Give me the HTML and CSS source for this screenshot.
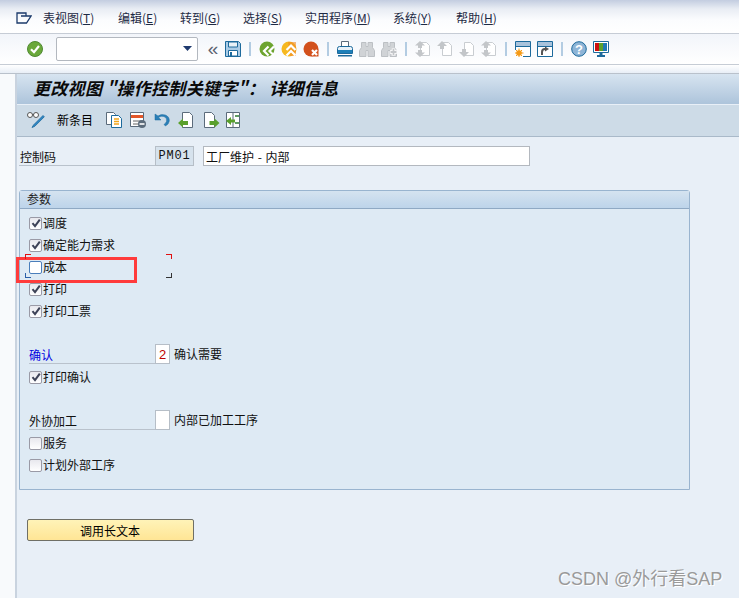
FILE: index.html
```html
<!DOCTYPE html>
<html lang="zh-CN">
<head>
<meta charset="utf-8">
<title>更改视图</title>
<link rel="stylesheet" href="styles.css">
</head>
<body>
<svg class="defs" width="0" height="0" aria-hidden="true">
  <defs>
    <symbol id="tick" viewBox="0 0 12 12"><path d="M2.5 6.2 5 9.2 9.8 2.6" fill="none" stroke="#3d4257" stroke-width="2"/></symbol>
    <symbol id="bino" viewBox="0 0 16 16"><path d="M2.500 1.500h4.500v4h2v-4h4.500v5l2 3v6H9V9.500H7v6H.500v-6l2-3z" fill="#d0d3d6" stroke="#bcc0c4"/></symbol>
    <symbol id="page" viewBox="0 0 16 16"><path d="M5.500 1.500h6l3 3v10h-9z" fill="#fff" stroke="#c9cdd1"/></symbol>
  </defs>
</svg>
<header class="menubar">
  <svg class="menu-icon" width="16" height="12" viewBox="0 0 16 12"><path d="M10 4V1H1v10h9.500L15 4H5" fill="none" stroke="#1b3a6b" stroke-width="1.300"/></svg>
  <nav class="menu">
    <span class="m1">表视图(<u>T</u>)</span>
    <span class="m2">编辑(<u>E</u>)</span>
    <span class="m3">转到(<u>G</u>)</span>
    <span class="m4">选择(<u>S</u>)</span>
    <span class="m5">实用程序(<u>M</u>)</span>
    <span class="m6">系统(<u>Y</u>)</span>
    <span class="m7">帮助(<u>H</u>)</span>
  </nav>
</header>
<div class="toolbar">
  <svg class="ic" viewBox="0 0 16 16"><circle cx="8" cy="8" r="7.500" fill="#6aa83a" stroke="#4f8a32"/><path d="M4 8.200 7 11.200 12 5" fill="none" stroke="#fff" stroke-width="2.200"/></svg>
  <div class="combo"><svg class="combo-arrow" width="9" height="5" viewBox="0 0 9 5"><path d="M0 0h9L4.500 5z" fill="#1f3a6e"/></svg></div>
  <span class="chev">«</span>
  <svg class="ic" viewBox="0 0 16 16"><path d="M.5.500h13l2 2v13H.500z" fill="#a9cbe6" stroke="#1d6a9c"/><path d="M3.500 1v5h9V1z" fill="#e8f1f8" stroke="#1d6a9c"/><path d="M3.500 15V9.500h9V15z" fill="#fff" stroke="#1d6a9c"/><path d="M6 11v4" stroke="#1d6a9c" stroke-width="2"/></svg>
  <i class="sep"></i>
  <svg class="ic" viewBox="0 0 16 16"><circle cx="8" cy="8" r="7.500" fill="#6da42f"/><path d="M9.500 5.500 5 10l4.500 4.500M15 5.500 10.500 10l4.500 4.500" fill="none" stroke="#fff" stroke-width="2.200"/></svg>
  <svg class="ic" viewBox="0 0 16 16"><circle cx="8" cy="8" r="7.500" fill="#f6b81f"/><path d="M7 1h8v14H9z" fill="#f08a24" opacity=".6"/><path d="M5.500 9l4.500-4.500L14.500 9M5.500 14.500 10 10l4.500 4.500" fill="none" stroke="#fff" stroke-width="2.200"/></svg>
  <svg class="ic" viewBox="0 0 16 16"><circle cx="8" cy="8" r="7.500" fill="#d2501c"/><path d="M8.500 8.500h7v7h-7z" fill="#d2501c"/><path d="M9 9l5 5M14 9l-5 5" stroke="#fff" stroke-width="2.200"/></svg>
  <i class="sep"></i>
  <svg class="ic" viewBox="0 0 16 16"><path d="M4.500.500h7v6h-7z" fill="#fff" stroke="#5b6b7b"/><path d="M.5 7.500a2 2 0 0 1 2-2h11a2 2 0 0 1 2 2v5H.500z" fill="#e8f1f8" stroke="#1d6a9c"/><path d="M1 9h14v3H1z" fill="#1d7fb8"/><path d="M1 14h14v1.500H1z" fill="#1d6a9c"/></svg>
  <svg class="ic"><use href="#bino"/></svg>
  <svg class="ic" viewBox="0 0 16 16"><use href="#bino" width="16" height="16"/><path d="M9 11h7M12.500 7.500v7" stroke="#fff" stroke-width="3.500"/><path d="M9.500 11h6M12.500 8v6" stroke="#c3c6c9" stroke-width="1.800"/></svg>
  <i class="sep"></i>
  <svg class="ic" viewBox="0 0 16 16"><use href="#page" width="16" height="16"/><path d="M5 0 0 4.500h3V7h4V4.500h3zM3 9v2.500H0L5 16l5-4.500H7V9z" fill="#c3c6c9"/></svg>
  <svg class="ic" viewBox="0 0 16 16"><use href="#page" width="16" height="16"/><path d="M5 0 0 5h3v3h4V5h3z" fill="#c3c6c9"/></svg>
  <svg class="ic" viewBox="0 0 16 16"><use href="#page" width="16" height="16"/><path d="M5 16l5-5H7V8H3v3H0z" fill="#c3c6c9"/></svg>
  <svg class="ic" viewBox="0 0 16 16"><use href="#page" width="16" height="16"/><path d="M5 0 0 4.500h3V7h4V4.500h3zM3 9v2.500H0L5 16l5-4.500H7V9z" fill="#c3c6c9"/></svg>
  <i class="sep"></i>
  <svg class="ic" viewBox="0 0 16 16"><path d="M.5.500h15v15H.500z" fill="#fff" stroke="#1d6a9c"/><path d="M1 1h14v4H1z" fill="#a9c3dc"/><path d="M0 5.500h16" stroke="#1d6a9c"/><path d="M0 9h8v7H0z" fill="#fff"/><circle cx="4" cy="12" r="2.800" fill="#f59a17"/><path d="M4 7.500v9M-.5 12h9M1 9l6 6M7 9l-6 6" stroke="#f59a17"/></svg>
  <svg class="ic" viewBox="0 0 16 16"><path d="M.5.500h15v15H.500z" fill="#fff" stroke="#1d6a9c"/><path d="M1 1h14v4H1z" fill="#a9c3dc"/><path d="M0 5.500h16" stroke="#1d6a9c"/><path d="M5 14v-3q0-3 3-3h1" fill="none" stroke="#555" stroke-width="2"/><path d="M8 5.500l4 2.500-4 2.500z" fill="#555"/></svg>
  <i class="sep"></i>
  <svg class="ic" viewBox="0 0 16 16"><circle cx="8" cy="8" r="7.300" fill="#8db4d6" stroke="#1d6a9c"/><text class="help-q" x="8" y="12.500" text-anchor="middle">?</text></svg>
  <svg class="ic" viewBox="0 0 16 16"><path d="M.5.500h15v11H.500z" fill="#fff" stroke="#1d6a9c"/><path d="M2 2h4v8H2z" fill="#cc1010"/><path d="M6 2h4v8H6z" fill="#5aa02c"/><path d="M10 2h4v8h-4z" fill="#1f77b4"/><path d="M6.500 12h3v2h-3zM4 14h8v2H4z" fill="#1d6a9c"/></svg>
</div>
<div class="toolbar-gap"></div>
<main class="screen">
  <h1 class="title">更改视图 "操作控制关键字"： 详细信息</h1>
  <div class="appbar">
    <svg class="ic ic-wide" viewBox="0 0 18 16"><circle cx="3" cy="3" r="2.500" fill="#fff" stroke="#555"/><circle cx="9" cy="3" r="2.500" fill="#fff" stroke="#555"/><path d="M5.500 2.500h1" stroke="#555"/><path d="M16 3.500 6.500 13 5 15.500l2.800-1.200 9.500-9.500z" fill="#2f86c4" stroke="#1d6a9c" stroke-width=".8"/></svg>
    <span class="appbar-text">新条目</span>
    <svg class="ic ap1" viewBox="0 0 16 16"><path d="M.5.500h7l2 2v10h-9z" fill="#fff" stroke="#5b6b7b"/><path d="M5.500 3.500h7l3 3v9h-10z" fill="#fff" stroke="#1d6a9c"/><path d="M8 7h5M8 9.500h5M8 12h5" stroke="#f2a71c" stroke-width="1.300"/></svg>
    <svg class="ic ap2" viewBox="0 0 16 16"><path d="M.5.500h13v14H.500z" fill="#fff" stroke="#5b6b7b"/><path d="M1 3h12v3H1z" fill="#e2572a"/><path d="M3 9h8M3 12h5" stroke="#666"/><circle cx="12" cy="12" r="4" fill="#5b6b7b"/><path d="M9.500 12h5" stroke="#fff" stroke-width="1.600"/></svg>
    <svg class="ic ap3" viewBox="0 0 16 16"><path d="M1 2v6h6L4.500 5.500Q7 3.500 10 4.500q3.500 1.500 2.500 5-.8 2-2.500 3l1.500 1.500q3.500-2 3.800-5 .2-4.500-4-6-4-1.200-7.300 1z" fill="#2a7fb8" stroke="#1d6a9c" stroke-width=".5"/></svg>
    <svg class="ic ap4" viewBox="0 0 16 16"><path d="M4.500.500h7l3 3v12h-10z" fill="#fff" stroke="#5b6b7b"/><path d="M0 11l5-4.500V9h5v4H5v2.500z" fill="#5aa02c"/></svg>
    <svg class="ic ap5" viewBox="0 0 16 16"><path d="M.5.500h7l3 3v12h-10z" fill="#fff" stroke="#5b6b7b"/><path d="M15.500 11l-5-4.500V9h-5v4h5v2.500z" fill="#5aa02c"/></svg>
    <svg class="ic ap6" viewBox="0 0 16 16"><path d="M.5.500h13v15H.500z" fill="#fff" stroke="#5b6b7b"/><path d="M7 .500v15" stroke="#5b6b7b"/><path d="M9 4h4M9 11h4" stroke="#2e7d32" stroke-width="1.500"/><path d="M0 9l5-4v2.500h4v3H5V13z" fill="#5aa02c"/></svg>
  </div>
  <div class="content">
    <div class="control-row">
      <label class="field-label field-label-top">控制码</label>
      <span class="code-box">PM01</span>
      <span class="text-box">工厂维护 - 内部</span>
    </div>
    <section class="group">
      <div class="group-head">参数</div>
      <div class="group-body">
        <div class="check-row"><span class="cb"><svg width="12" height="12"><use href="#tick"/></svg></span>调度</div>
        <div class="check-row"><span class="cb"><svg width="12" height="12"><use href="#tick"/></svg></span>确定能力需求</div>
        <div class="check-row"><span class="cb cb-focus"></span>成本</div>
        <div class="check-row"><span class="cb"><svg width="12" height="12"><use href="#tick"/></svg></span>打印</div>
        <div class="check-row"><span class="cb"><svg width="12" height="12"><use href="#tick"/></svg></span>打印工票</div>
        <div class="field-row">
          <label class="field-label field-label-blue">确认</label>
          <span class="mini-box mini-red">2</span>
          <span class="after-label">确认需要</span>
        </div>
        <div class="check-row check-row-sub"><span class="cb"><svg width="12" height="12"><use href="#tick"/></svg></span>打印确认</div>
        <div class="field-row">
          <label class="field-label">外协加工</label>
          <span class="mini-box"></span>
          <span class="after-label">内部已加工工序</span>
        </div>
        <div class="check-row check-row-sub"><span class="cb"></span>服务</div>
        <div class="check-row"><span class="cb"></span>计划外部工序</div>
      </div>
    </section>
    <button class="long-text" type="button">调用长文本</button>
  </div>
</main>
<div class="highlight"></div>
<div class="focus-marks"></div>
<div class="watermark">CSDN @外行看SAP</div>
</body>
</html>
```
FILE: styles.css
```css
* { box-sizing: border-box; }
html, body { height: 100%; }
body {
  margin: 0;
  position: relative;
  overflow: hidden;
  background: #f8fafc;
  font: 12px/20px "Noto Sans CJK SC", "Liberation Sans", sans-serif;
  color: #111;
}
.defs { position: absolute; }
.menubar {
  height: 34px;
  display: flex;
  align-items: center;
  padding: 3px 0 0 16px;
  background: linear-gradient(#c3cde0, #e9edf4 9px, #fbfcfe 20px, #ffffff);
  border-bottom: 1px solid #c6ccd5;
}
.menu-icon { flex: none; }
.menu { display: flex; margin-left: 11px; color: #1e2a44; }
.menu span { white-space: nowrap; }
.menu u { text-underline-offset: 1px; }
.m1, .m2, .m3, .m4, .m5, .m6, .m7 { display: block; }
.m1 { width: 75px; }
.m2 { width: 62px; }
.m3 { width: 63px; }
.m4 { width: 62px; }
.m5 { width: 88px; }
.m6 { width: 63px; }
.toolbar {
  height: 31px;
  display: flex;
  align-items: center;
  gap: 6px;
  padding: 0 0 1px 27px;
  background: linear-gradient(#f2f5fa, #ffffff);
  border-bottom: 1px solid #c6ccd5;
}
.ic { width: 16px; height: 16px; flex: none; display: block; }
.ic-wide { width: 18px; }
.help-q { font: bold 13px "Liberation Sans", sans-serif; fill: #fff; }
.combo {
  width: 142px;
  height: 24px;
  margin-left: 7px;
  display: flex;
  align-items: center;
  justify-content: flex-end;
  padding-right: 5px;
  background: #fff;
  border: 1px solid #b3b8bf;
  border-radius: 2px;
}
.chev {
  width: 14px;
  margin: 0 -1px 0 2px;
  font: 19px/20px "Liberation Sans", sans-serif;
  color: #5a6370;
  text-align: center;
}
.sep {
  width: 6px;
  height: 14px;
  flex: none;
  background: linear-gradient(#b3cce2, #b3cce2) center / 2px 100% no-repeat;
}
.toolbar-gap {
  height: 8px;
  background: linear-gradient(#fff, #e8eef6);
  border-bottom: 1px solid #b9c1cb;
  box-sizing: content-box;
}
.screen {
  margin-left: 15px;
  height: calc(100% - 74px);
  border-left: 2px solid #c9d3df;
  background: #e8eff7;
}
.title {
  height: 31px;
  margin: 0;
  padding: 0 0 0 16px;
  font: italic bold 17px/28px "Noto Sans CJK SC", sans-serif;
  letter-spacing: .3px;
  color: #0a0a0a;
  background: linear-gradient(#d7e4f0, #adc4db);
  border-bottom: 1px solid #e8eff7;
}
.appbar {
  height: 32px;
  display: flex;
  align-items: center;
  padding: 0 0 2px 10px;
  background: #cddbe7;
  border-bottom: 1px solid #a9b9c9;
}
.appbar-text { margin-left: 12px; width: 37px; color: #000; }
.ap1 { margin-left: 12px; }
.ap2, .ap3, .ap4, .ap6 { margin-left: 8px; }
.ap5 { margin-left: 10px; }
.ap6 { margin-left: 6px; }
.content { padding: 9px 0 0 2px; }
.control-row { display: flex; height: 20px; }
.field-label {
  display: block;
  width: 126px;
  height: 20px;
  line-height: 21px;
  border-bottom: 1px solid #b9c2cc;
}
.field-label-top { width: 136px; padding-left: 1px; }
.field-label-blue { color: #0000e0; }
.code-box {
  width: 39px;
  font: 12px/18px "Liberation Mono", monospace;
  letter-spacing: .8px;
  text-align: center;
  background: #d6e2ed;
  border: 1px solid #b6bec7;
}
.text-box {
  width: 327px;
  margin-left: 9px;
  padding-left: 2px;
  line-height: 19px;
  word-spacing: 1px;
  background: #fff;
  border: 1px solid #b3b8bf;
}
.group {
  width: 671px;
  height: 300px;
  margin-top: 24px;
  background: #deeaf4;
  border: 1px solid #99b4cf;
  border-radius: 3px 3px 0 0;
}
.group-head {
  height: 18px;
  padding-left: 7px;
  line-height: 16px;
  color: #222;
  background: linear-gradient(#d5e3f0, #bdd4ea);
  border-bottom: 1px solid #8fa9c4;
}
.group-body { padding: 3px 0 0 9px; }
.check-row { display: flex; align-items: center; height: 22px; }
.check-row-sub { margin-top: 2px; }
.cb {
  width: 13px;
  height: 13px;
  margin-right: 1px;
  flex: none;
  display: block;
  background: linear-gradient(#e8e8ee, #fff);
  border: 1px solid #9a9aa6;
  border-radius: 2px;
}
.cb svg { display: block; margin: -.5px 0 0 -.5px; }
.cb-focus { background: #fff; border-color: #4a7ebb; }
.field-row { display: flex; height: 20px; margin-top: 22px; }
.mini-box {
  width: 15px;
  height: 20px;
  text-align: center;
  line-height: 19px;
  background: #fff;
  border: 1px solid #b6bec7;
}
.mini-red { color: #c00000; font-family: "Liberation Sans", sans-serif; font-size: 13px; }
.after-label { margin-left: 4px; line-height: 20px; }
.long-text {
  display: block;
  width: 167px;
  height: 22px;
  margin: 29px 0 0 8px;
  padding: 1px 1px 0 0;
  font: inherit;
  line-height: 20px;
  color: #000;
  background: linear-gradient(#fff3b8, #ffe595);
  border: 1px solid #6f6f66;
  border-radius: 2px;
}
.highlight {
  position: absolute;
  left: 16px;
  top: 257px;
  width: 121px;
  height: 26px;
  border: 3px solid #ff3b3b;
}
.focus-marks {
  position: absolute;
  left: 25px;
  top: 254px;
  width: 147px;
  height: 24px;
  background:
    linear-gradient(#e01010, #e01010) 0 0 / 6px 1px no-repeat,
    linear-gradient(#e01010, #e01010) 0 0 / 1px 5px no-repeat,
    linear-gradient(#e01010, #e01010) 100% 0 / 6px 1px no-repeat,
    linear-gradient(#e01010, #e01010) 100% 0 / 1px 5px no-repeat,
    linear-gradient(#2a5ea8, #2a5ea8) 0 100% / 6px 1px no-repeat,
    linear-gradient(#2a5ea8, #2a5ea8) 0 100% / 1px 5px no-repeat,
    linear-gradient(#333, #333) 100% 100% / 6px 1px no-repeat,
    linear-gradient(#333, #333) 100% 100% / 1px 5px no-repeat;
}
.watermark {
  position: absolute;
  left: 558px;
  top: 568px;
  font: 18px/22px "Liberation Sans", "Noto Sans CJK SC", sans-serif;
  color: #9a9a9a;
  text-shadow: 1px 1px 0 #fff;
  white-space: nowrap;
}
```
